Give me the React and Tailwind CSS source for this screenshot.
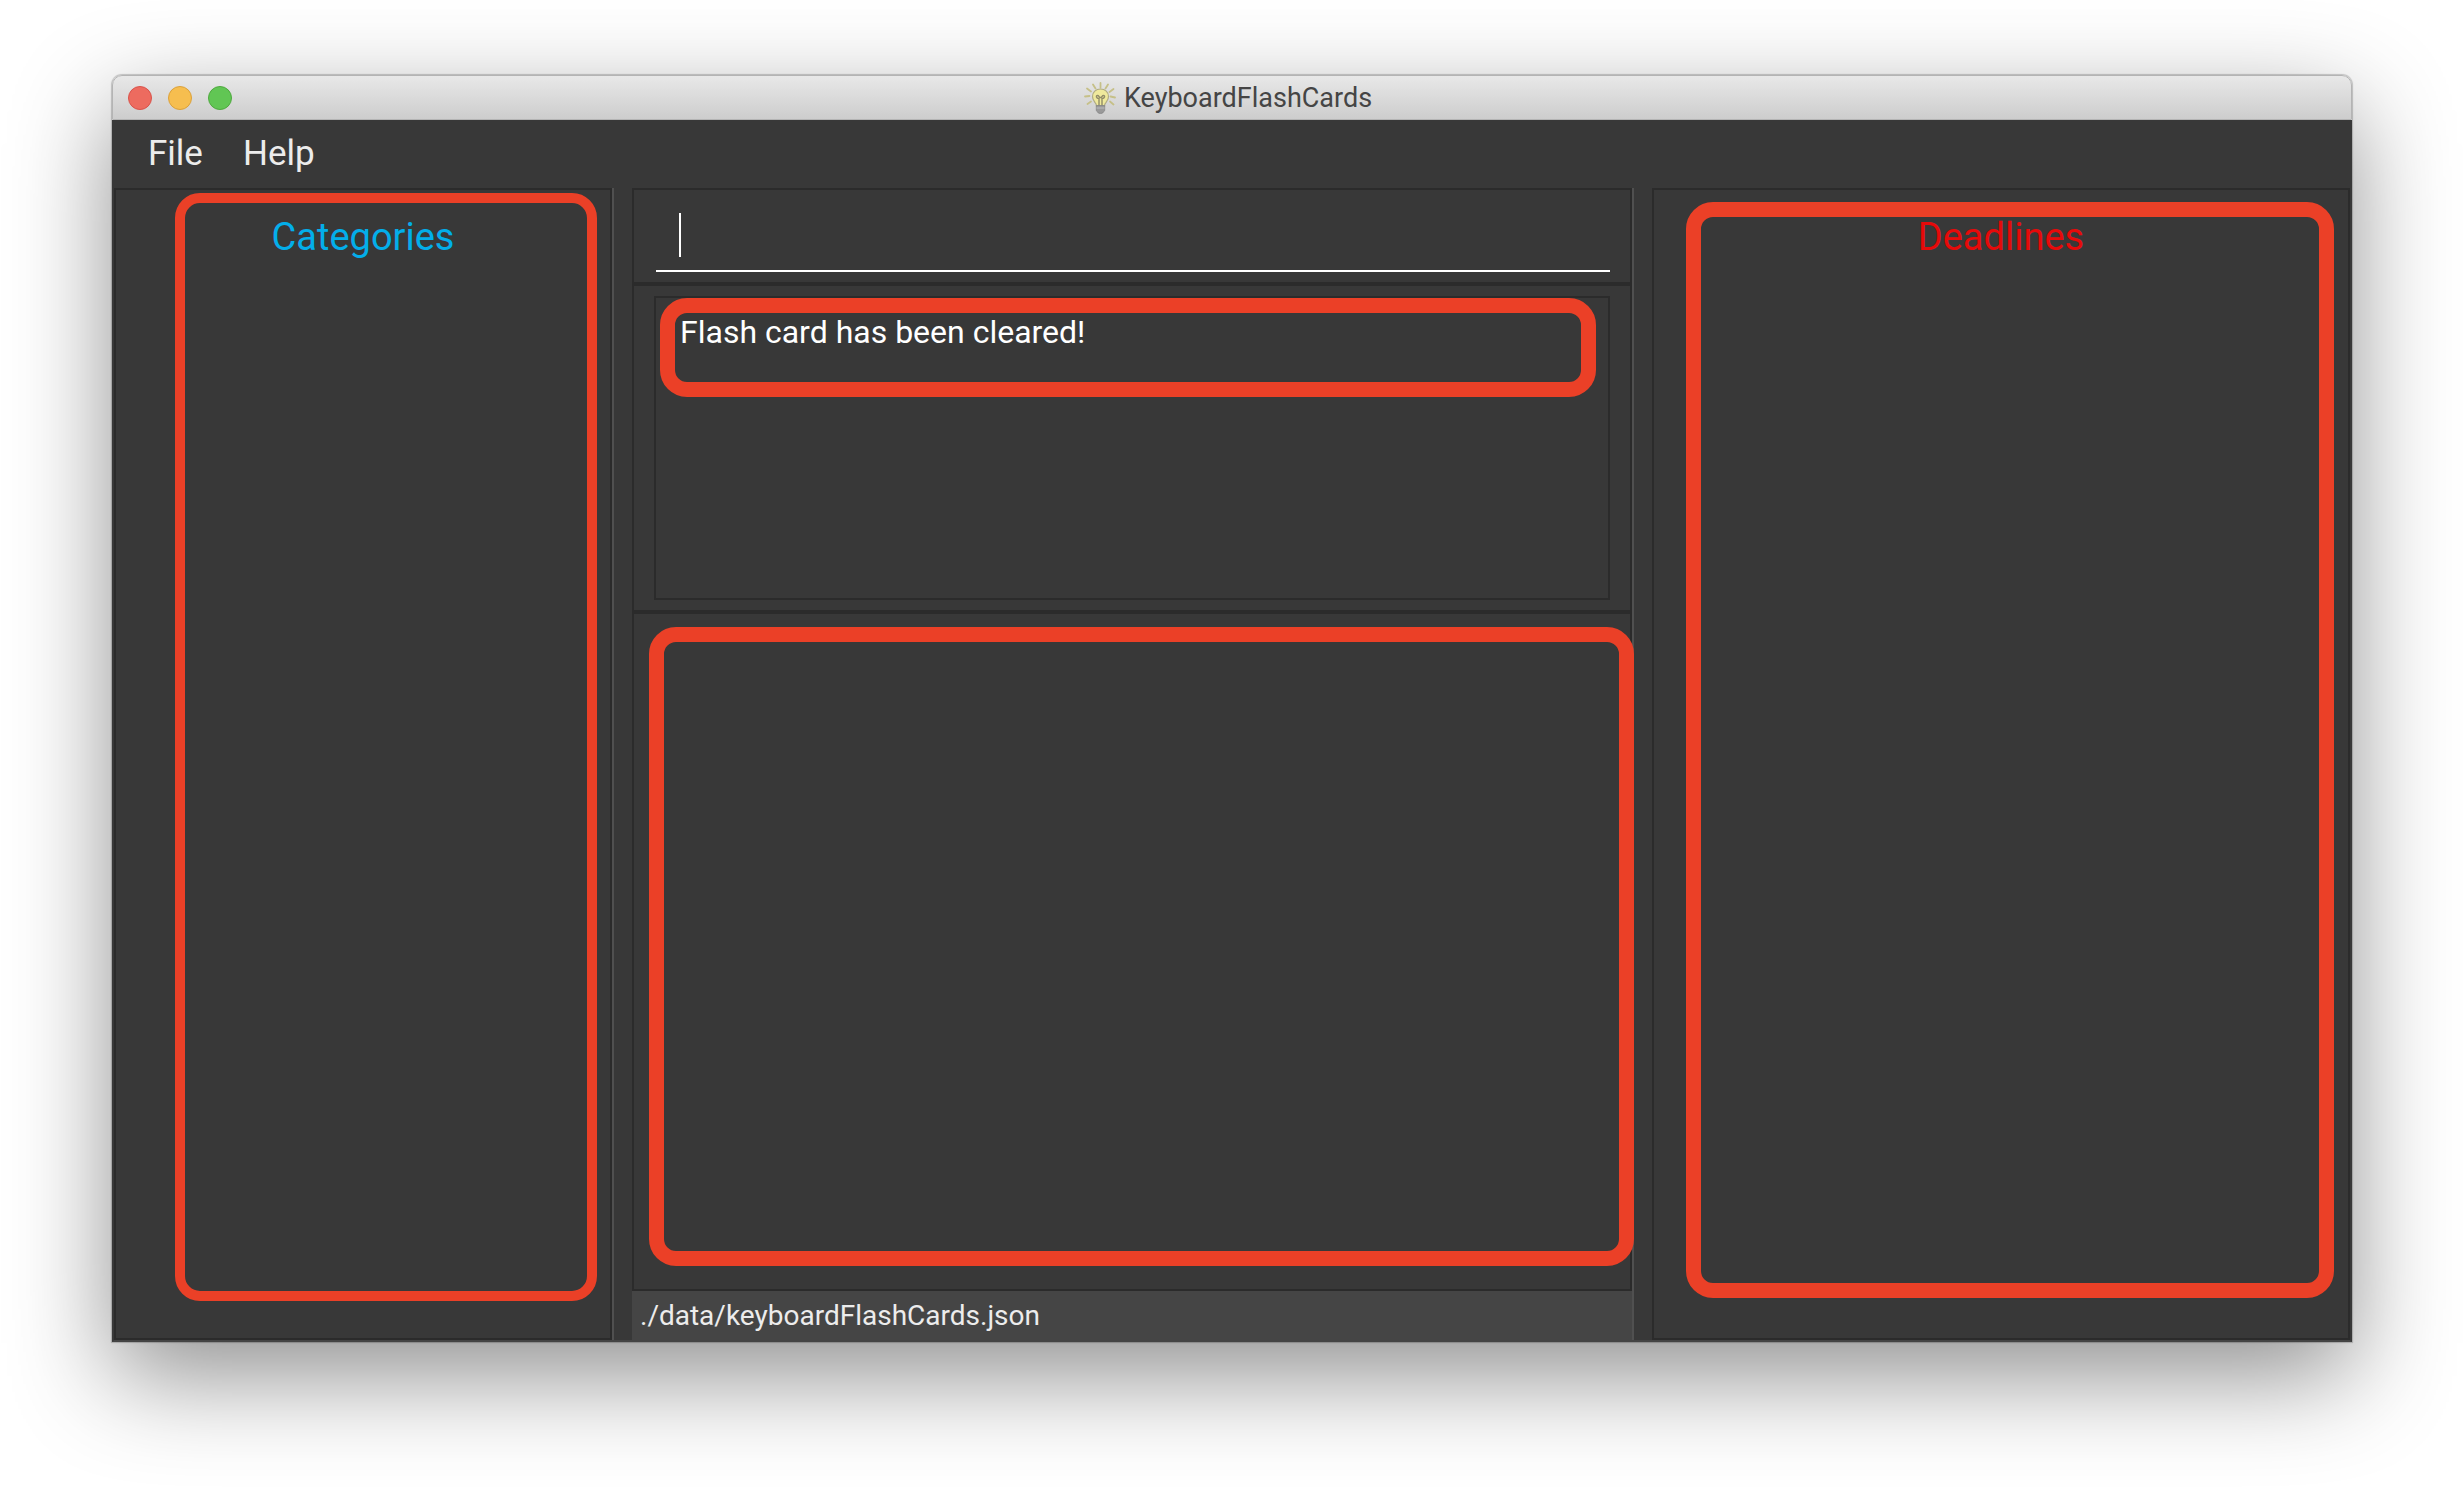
const panel = "border-2 border-[#2b2b2b] bg-[#383838]";

function Bulb() {
  return (
    <svg viewBox="0 0 32 32" className="h-8 w-8" fill="none" aria-hidden="true">
      <g stroke="#c6c088" strokeWidth="1.8" strokeLinecap="round">
        <path d="M16.500 1v4.500M9 2.500l2.500 4M24 2.500l-2.500 4M3 6.500l4 3M29.500 7l-4 3M1 14.500l4.500-.500M31 15.500l-4.500-1M3.500 22l3.500-2.500M29.500 22.500l-3.500-3" />
      </g>
      <path d="M16.500 7c-4.700 0-8 3.200-8 7.400 0 3 1.500 4.600 2.600 6.200 1 1.200 1.400 2.300 1.400 3.400h8c0-1.100.4-2.200 1.400-3.400 1.100-1.600 2.600-3.200 2.600-6.200 0-4.200-3.300-7.400-8-7.400z" fill="#efe99c" stroke="#b0ac84" strokeWidth="1.2" />
      <path d="M15 24v-7.500c-3 0-3.200-3-1.500-3s1.500 2 3 2 1.300-2 3-2 1.500 3-1.500 3V24" stroke="#918c68" strokeWidth="1.4" />
      <path d="M12.300 23.500h8.400v4.700c0 1.200-1.200 1.500-1.800 2.500-.5 1-4.300 1-4.800 0-.6-1-1.800-1.300-1.800-2.500z" fill="#999" stroke="#858585" strokeWidth=".8" />
      <path d="M12.500 26h8" stroke="#bdbdbd" strokeWidth="1" />
    </svg>
  );
}

function TitleBar() {
  return (
    <header className="relative flex h-[45px] items-center justify-center gap-2 rounded-t-[10px] border border-[#b4b4b4] bg-linear-to-b from-[#e8e8e8] to-[#cdcdcd] pr-2">
      <div className="absolute left-[15px] flex gap-4">
        <button aria-label="Close" className="h-6 w-6 rounded-full border border-[#d9534b] bg-[#ed6b5f]" />
        <button aria-label="Minimize" className="h-6 w-6 rounded-full border border-[#dba13b] bg-[#f6be4f]" />
        <button aria-label="Zoom" className="h-6 w-6 rounded-full border border-[#4fa93f] bg-[#61c654]" />
      </div>
      <Bulb />
      <h1 className="pt-px text-[27px] leading-8 text-[#454545]">KeyboardFlashCards</h1>
    </header>
  );
}

export default function App() {
  return (
    <div className="flex min-h-screen flex-col bg-white px-[112px] pt-[75px] pb-[148px] font-[Roboto,sans-serif]">
      <div className="flex flex-1 flex-col rounded-t-[10px] shadow-[0_0_1px_1px_rgba(0,0,0,0.2),0_34px_100px_rgba(0,0,0,0.44)]">
        <TitleBar />
        <div className="flex flex-1 flex-col border-x-2 border-b-2 border-x-[#383838] border-b-[#444] bg-[#383838]">
          <nav className="flex h-[68px] items-center gap-10 px-[34px] pb-px text-[35px] leading-10 text-[#ececec]">
            <button>File</button>
            <button>Help</button>
          </nav>
          <main className="grid flex-1 grid-cols-[500fr_1002fr_698fr] gap-[18px]">
            <div className="flex border-r-2 border-[#505050]">
              <section className={`${panel} relative flex-1 pt-[25px]`}>
                <h2 className="text-center text-[38px] leading-[44px] text-[#03aeea]">Categories</h2>
                <div className="absolute top-[3px] right-[13px] bottom-[37px] left-[59px] rounded-[25px] border-[10px] border-[#eb4027]" />
              </section>
            </div>
            <div className="flex flex-col border-r-2 border-[#505050]">
              <section className={`${panel} h-24 pt-5 pr-5 pl-[22px]`}>
                <div className="flex h-[62px] items-center border-b-2 border-white pb-[10px] pl-[23px]">
                  <span className="h-11 w-[2px] shrink-0 bg-white" />
                  <input aria-label="Command" className="min-w-0 flex-1 bg-transparent text-[32px] text-white outline-none" />
                </div>
              </section>
              <section className={`${panel} flex h-[328px] px-5 py-[10px]`}>
                <div className="relative flex-1 border-2 border-[#2b2b2b] px-6 pt-[14px]">
                  <p className="text-[32px] leading-10 text-white">Flash card has been cleared!</p>
                  <div className="absolute top-0 right-3 left-1 h-[99px] rounded-[27px] border-[15px] border-[#eb4027]" />
                </div>
              </section>
              <section className={`${panel} relative flex-1`}>
                <div className="absolute top-[13px] -right-1 bottom-[23px] left-[15px] rounded-[27px] border-[15px] border-[#eb4027]" />
              </section>
              <footer className="flex h-[49px] items-center bg-[#454545] px-2 text-[28px] leading-9 text-[#ececec]">
                ./data/keyboardFlashCards.json
              </footer>
            </div>
            <section className={`${panel} relative pt-[25px]`}>
              <h2 className="text-center text-[38px] leading-[44px] text-[#e60a0a]">Deadlines</h2>
              <div className="absolute top-3 right-[14px] bottom-10 left-8 rounded-[27px] border-[15px] border-[#eb4027]" />
            </section>
          </main>
        </div>
      </div>
    </div>
  );
}
